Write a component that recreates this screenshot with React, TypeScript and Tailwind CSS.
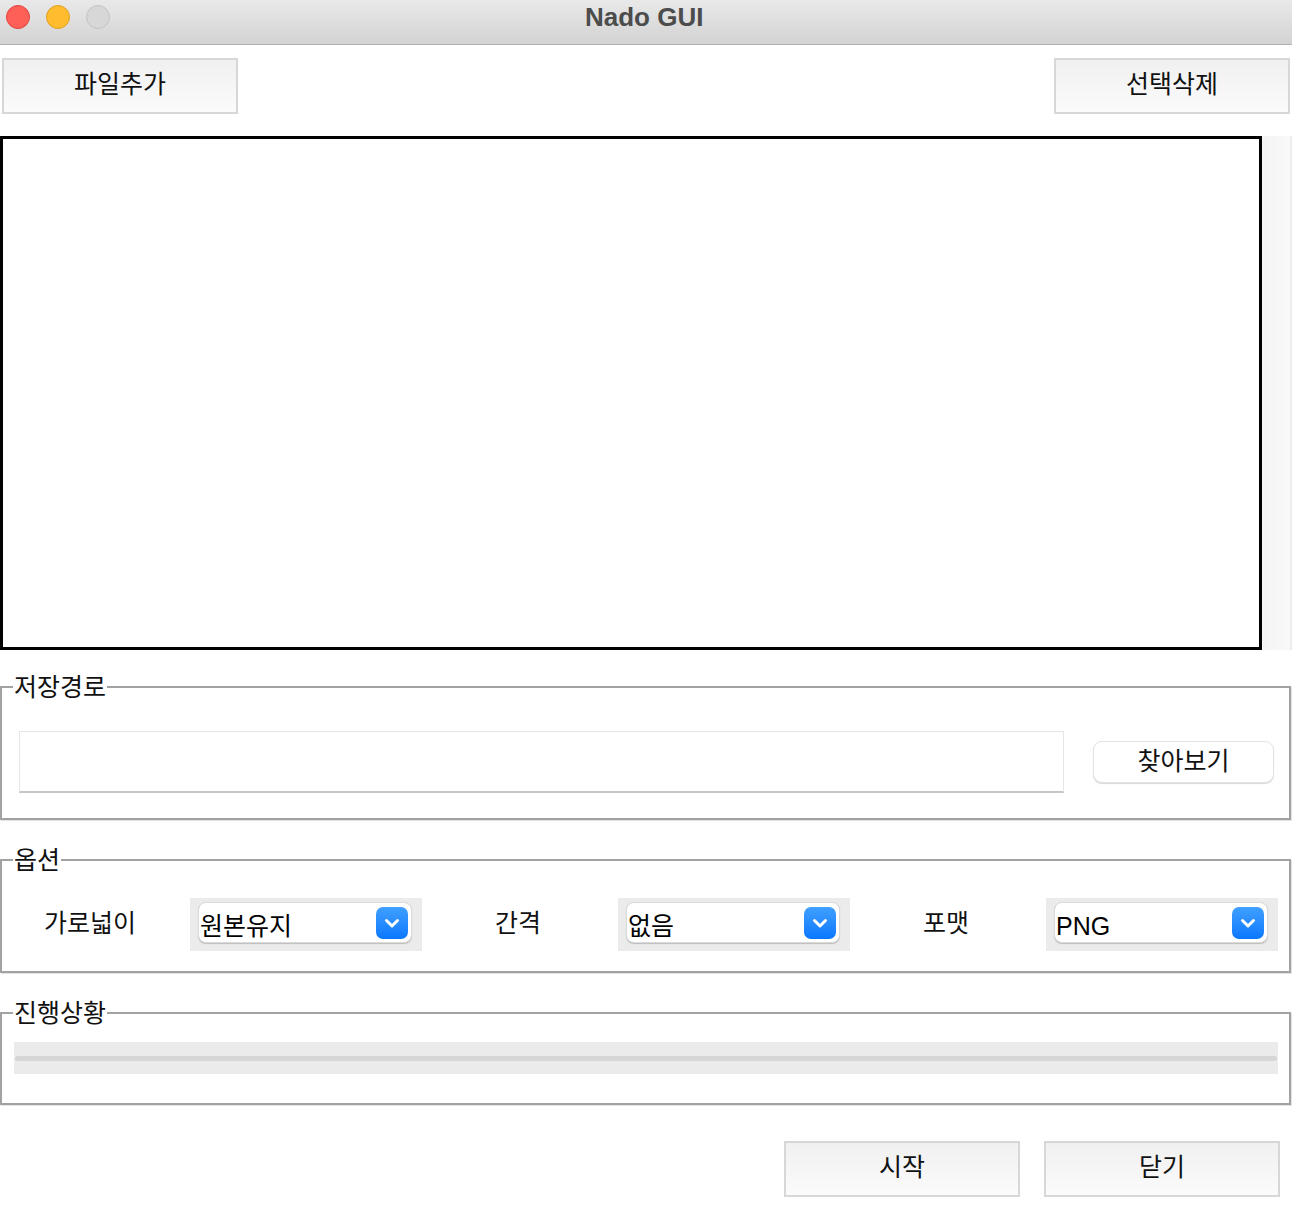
import React from "react";

function Btn({ label, className = "" }: { label: string; className?: string }) {
  return (
    <div
      className={
        "flex h-[56px] w-[236px] items-center justify-center border-2 border-[#d7d7d7] bg-linear-to-b from-[#f0f0f0] to-[#fbfbfb] pb-[4px] text-[25px] leading-[28px] text-[#111] " +
        className
      }
    >
      {label}
    </div>
  );
}

function Group({ label, className = "", children }: { label: string; className?: string; children: React.ReactNode }) {
  return (
    <fieldset
      className={
        "w-[1291px] border-2 border-[#a2a2a2] shadow-[1px_1px_0_#e3e3e3] " + className
      }
    >
      <legend className="ml-[11px] px-[1px] text-[25px] leading-[28px] text-[#111]">
        {label}
      </legend>
      {children}
    </fieldset>
  );
}

function Chevron() {
  return (
    <div className="flex h-[32px] w-[32px] items-center justify-center rounded-[7px] bg-linear-to-b from-[#3fa0ff] to-[#0877ff]">
      <svg width="32" height="32" viewBox="0 0 32 32">
        <path d="M10.5 13.5 L16 19 L21.5 13.5" fill="none" stroke="#fff" strokeWidth="3" strokeLinecap="round" strokeLinejoin="round" />
      </svg>
    </div>
  );
}

function Combo({ value, latin = false, className = "" }: { value: string; latin?: boolean; className?: string }) {
  return (
    <div className={"h-[53px] w-[232px] bg-[#ebebeb] pl-[8px] pt-[4px] " + className}>
      <div className="flex h-[41px] w-[214px] items-center justify-between rounded-[8px] border border-[#dadada] bg-white pr-[3px] pl-[1px] shadow-[0_1px_1px_#bdbdbd]">
        <span
          className={
            (latin ? "text-[25px] " : "text-[25px] ") +
            "pt-[6px] leading-[28px] text-black"
          }
        >
          {value}
        </span>
        <Chevron />
      </div>
    </div>
  );
}

export default function App() {
  return (
    <div className="h-[1212px] w-[1292px] overflow-hidden bg-white font-['Liberation_Sans','Noto_Sans_CJK_KR',sans-serif]">
      {/* title bar */}
      <div className="flex h-[45px] items-start border-b border-[#b1b1b1] bg-linear-to-b from-[#e9e9e9] to-[#d3d3d3]">
        <div className="flex items-center gap-[16px] pl-[6px] pt-[5px]">
          <div className="h-[24px] w-[24px] rounded-full border border-[#e2463f] bg-[#fe5f57]" />
          <div className="h-[24px] w-[24px] rounded-full border border-[#dfa123] bg-[#febc2e]" />
          <div className="h-[24px] w-[24px] rounded-full border border-[#c4c4c4] bg-[#d7d7d7]" />
        </div>
        <div className="ml-[475px] pt-[2px] text-[26px] leading-[30px] font-bold text-[#4c4c4c]">Nado GUI</div>
      </div>

      {/* top buttons */}
      <div className="mt-[13px] flex justify-between pl-[2px] pr-[2px]">
        <Btn label="파일추가" />
        <Btn label="선택삭제" />
      </div>

      {/* listbox */}
      <div className="mt-[22px] flex h-[514px]">
        <div className="h-full w-[1262px] border-[3px] border-black bg-white" />
        <div className="h-full w-[30px] border-r-2 border-[#ececec] bg-linear-to-r from-[#f4f4f4] to-[#f9f9f9]" />
      </div>

      {/* 저장경로 */}
      <Group label="저장경로" className="mt-[23px] pb-[25px]">
        <div className="mt-[30px] flex items-center">
          <div className="ml-[17px] h-[62px] w-[1045px] border border-[#e6e6e6] border-b-[2px] border-b-[#c6c6c6] bg-white" />
          <div className="ml-[29px] flex h-[42px] w-[181px] items-center justify-center rounded-[9px] border border-[#e3e3e3] bg-white pb-[3px] text-[25px] leading-[28px] text-[#111] shadow-[0_1px_1px_#d5d5d5]">
            찾아보기
          </div>
        </div>
      </Group>

      {/* 옵션 */}
      <Group label="옵션" className="mt-[26px] pb-[20px]">
        <div className="mt-[24px] flex items-center">
          <div className="w-[176px] pb-[4px] text-center text-[25px] leading-[28px] text-[#111]">가로넓이</div>
          <Combo value="원본유지" className="ml-[12px]" />
          <div className="w-[192px] pb-[4px] text-center text-[25px] leading-[28px] text-[#111]">간격</div>
          <Combo value="없음" className="ml-[4px]" />
          <div className="w-[192px] pb-[4px] text-center text-[25px] leading-[28px] text-[#111]">포맷</div>
          <Combo value="PNG" latin className="ml-[4px]" />
        </div>
      </Group>

      {/* 진행상황 */}
      <Group label="진행상황" className="mt-[26px] pb-[29px]">
        <div className="mt-[15px] ml-[12px] flex h-[32px] w-[1264px] items-center bg-[#ebebeb] px-[1px]">
          <div className="h-[5px] w-full rounded-full bg-[#d6d6d6]" />
        </div>
      </Group>

      {/* bottom buttons */}
      <div className="mt-[36px] flex justify-end gap-[24px] pr-[12px]">
        <Btn label="시작" className="h-[55px]" />
        <Btn label="닫기" className="h-[55px]" />
      </div>
    </div>
  );
}
